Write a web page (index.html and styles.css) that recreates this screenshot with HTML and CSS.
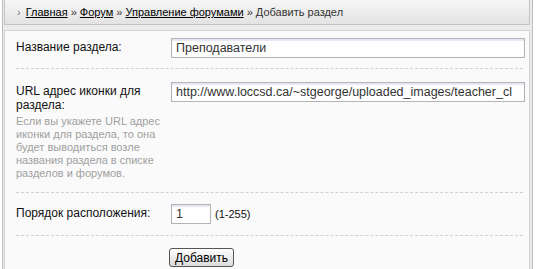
FILE: index.html
```html
<!DOCTYPE html>
<html lang="ru">
<head>
    <meta charset="UTF-8">
    <title>Добавить раздел</title>
    <link rel="stylesheet" href="styles.css">
</head>
<body>
    <div class="wrap">
        <div class="crumbs">
            <span class="arrow">›</span>
            <a href="#">Главная</a> » <a href="#">Форум</a> » <a href="#">Управление форумами</a> » Добавить раздел
        </div>
        <form class="panel">
            <div class="row first">
                <label class="label" for="title">Название раздела:</label>
                <div class="field"><input type="text" id="title" class="text wide" value="Преподаватели"></div>
            </div>
            <div class="row">
                <div class="label">
                    <label for="icon">URL адрес иконки для раздела:</label>
                    <p class="hint">Если вы укажете URL адрес иконки для раздела, то она будет выводиться возле названия раздела в списке разделов и форумов.</p>
                </div>
                <div class="field"><input type="text" id="icon" class="text wide" value="http://www.loccsd.ca/~stgeorge/uploaded_images/teacher_cl"></div>
            </div>
            <div class="row third">
                <label class="label" for="order">Порядок расположения:</label>
                <div class="field"><input type="text" id="order" class="text short" value="1"><span class="range">(1-255)</span></div>
            </div>
            <div class="row last">
                <div class="label"></div>
                <div class="field"><button type="submit">Добавить</button></div>
            </div>
        </form>
    </div>
</body>
</html>
```

FILE: styles.css
```css
body {
    margin: 0;
    background: #fff;
    font-family: "Liberation Sans", Arial, sans-serif;
    font-size: 12px;
    color: #111;
}
.wrap {
    margin-left: 2px;
    width: 526px;
    height: 269px;
    padding: 0 2px 0 1px;
    border-left: 1px solid #bcbcbc;
    border-right: 1px solid #bcbcbc;
    background: #ebebeb;
    overflow: hidden;
}
.crumbs {
    height: 24px;
    line-height: 25px;
    padding-left: 12px;
    border: 1px solid #c4c4c4;
    border-top: none;
    background: linear-gradient(#f6f6f6, #e3e3e3);
    font-size: 11px;
    color: #333;
}
.crumbs a {
    color: #000;
}
.crumbs .arrow {
    color: #777;
    margin-right: 2px;
}
.panel {
    margin: 5px 0 0;
    padding: 0 6px 0 11px;
    background: #fafafa;
    border: 1px solid #d2d2d2;
    height: 260px;
}
.row {
    display: grid;
    grid-template-columns: 155px 1fr;
    align-items: start;
    padding: 13px 0 12px;
    border-bottom: 1px dashed #cfcfcf;
}
.row.first {
    padding-top: 7px;
    padding-bottom: 10px;
}
.row.third {
    padding-top: 11px;
    padding-bottom: 11px;
}
.row.last {
    border-bottom: none;
    padding-top: 12px;
}
.label {
    padding-top: 2px;
    line-height: 14px;
}
.field {
    display: flex;
    align-items: center;
}
.hint {
    margin: 3px 0 0;
    font-size: 11px;
    line-height: 13px;
    color: #a0a0a0;
}
.text {
    box-sizing: border-box;
    height: 20px;
    padding: 0 4px;
    border: 1px solid #b4b4b4;
    box-shadow: inset 0 2px 1px #e6e6f6;
    background: #fff;
    font-family: "Liberation Sans", Arial, sans-serif;
    font-size: 12.5px;
    color: #333;
}
.wide {
    width: 354px;
}
.short {
    width: 40px;
}
.range {
    margin-left: 4px;
    font-size: 11px;
}
button {
    margin-left: -2px;
    height: 19px;
    padding: 0 5px;
    border: 1px solid #555;
    border-radius: 3px;
    background: linear-gradient(#fdfdfd, #dcdcdc);
    font-family: "Liberation Sans", Arial, sans-serif;
    font-size: 12px;
    color: #000;
}
```
